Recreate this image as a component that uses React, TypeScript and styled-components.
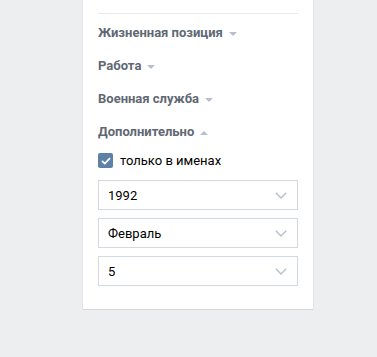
import { createGlobalStyle } from "styled-components";
import styled from "styled-components";

const GlobalStyle = createGlobalStyle`
  html, body {
    margin: 0;
    padding: 0;
    background: #edeef0;
  }
  body {
    font-family: Roboto, "Open Sans", "Liberation Sans", sans-serif;
    -webkit-font-smoothing: antialiased;
  }
`;

type Section = { title: string; open?: boolean };

const sections: Section[] = [
  { title: "Жизненная позиция" },
  { title: "Работа" },
  { title: "Военная служба" },
  { title: "Дополнительно", open: true },
];

const selects = ["1992", "Февраль", "5"];

const Caret = ({ up }: { up?: boolean }) => (
  <CaretSvg width="8" height="4" viewBox="0 0 8 4">
    {up ? <polygon points="0,4 8,4 4,0" /> : <polygon points="0,0 8,0 4,4" />}
  </CaretSvg>
);

const Chevron = () => (
  <svg width="12" height="7" viewBox="0 0 12 7">
    <polyline
      points="0.8,0.8 6,6 11.2,0.8"
      fill="none"
      stroke="#b8c0ca"
      strokeWidth="1.4"
    />
  </svg>
);

const App = () => {
  return (
    <Page>
      <GlobalStyle />
      <Panel>
        <Separator />
        <List>
          {sections.map((s) => (
            <Heading key={s.title}>
              {s.title}
              <Caret up={s.open} />
            </Heading>
          ))}
        </List>
        <CheckRow>
          <CheckBox>
            <svg width="10" height="8" viewBox="0 0 10 8">
              <polyline
                points="1,4 3.8,6.6 9,1.2"
                fill="none"
                stroke="#fff"
                strokeWidth="1.8"
              />
            </svg>
          </CheckBox>
          только в именах
        </CheckRow>
        <Selects>
          {selects.map((v) => (
            <Select key={v}>
              <span>{v}</span>
              <Chevron />
            </Select>
          ))}
        </Selects>
      </Panel>
    </Page>
  );
};

export default App;

/* styled */
const Page = styled.div`
  width: 377px;
  height: 357px;
  padding-left: 83px;
  box-sizing: border-box;
`;
const Panel = styled.div`
  width: 230px;
  background: #fff;
  box-sizing: border-box;
  padding: 13px 15px 23px;
  box-shadow: 0 1px 0 0 #d7d8db, 0 0 0 1px #e3e4e8;
`;
const Separator = styled.div`
  height: 1px;
  background: #e7e8ec;
`;
const List = styled.div`
  padding-top: 3px;
`;
const Heading = styled.div`
  display: flex;
  align-items: center;
  gap: 6px;
  padding: 8px 0 9px;
  line-height: 16px;
  font-size: 13px;
  font-weight: 700;
  color: #5f6873;
`;
const CaretSvg = styled.svg`
  fill: #b6bfca;
  margin-top: 1px;
`;
const CheckRow = styled.div`
  display: flex;
  align-items: center;
  gap: 7px;
  margin-top: 4px;
  height: 15px;
  font-size: 13px;
  color: #000;
`;
const CheckBox = styled.div`
  width: 15px;
  height: 15px;
  border-radius: 2px;
  background: #5e81a8;
  display: flex;
  align-items: center;
  justify-content: center;
`;
const Selects = styled.div`
  display: flex;
  flex-direction: column;
  gap: 8px;
  margin-top: 12px;
`;
const Select = styled.div`
  height: 30px;
  box-sizing: border-box;
  border: 1px solid #d3d9de;
  display: flex;
  align-items: center;
  justify-content: space-between;
  padding: 0 10px 0 9px;
  font-size: 13px;
  color: #000;
`;
